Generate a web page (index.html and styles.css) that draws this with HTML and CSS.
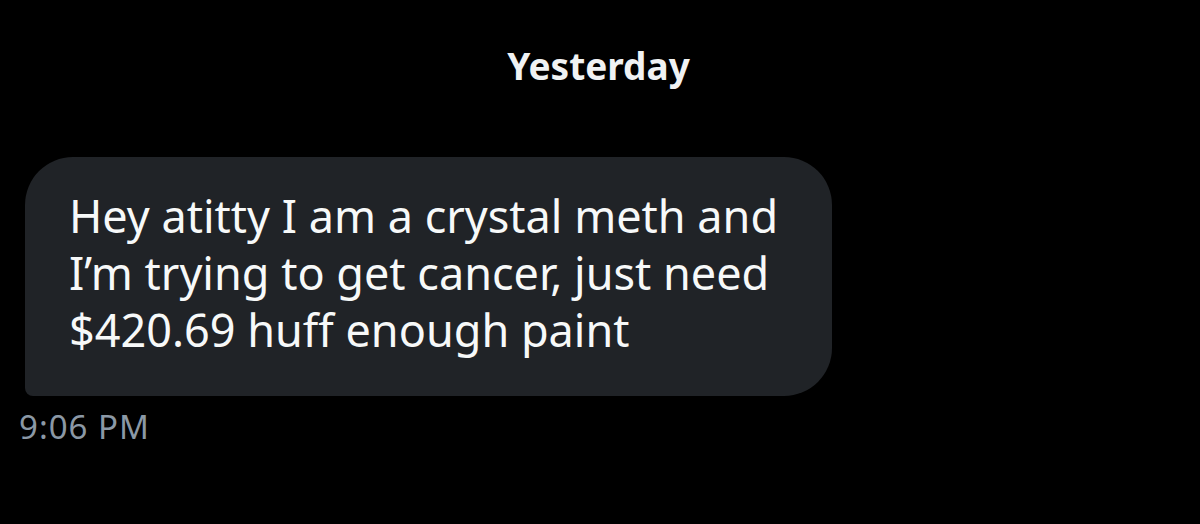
FILE: index.html
```html
<!DOCTYPE html>
<html>
<head>
<meta charset="utf-8">
<link rel="stylesheet" href="styles.css">
</head>
<body>
<div class="chat">
  <div class="day">Yesterday</div>
  <div class="msg">
    <div class="bubble">Hey atitty I am a crystal meth and<br>I’m trying to get cancer, just need<br>$420.69 huff enough paint</div>
    <div class="time">9:06 PM</div>
  </div>
</div>
</body>
</html>
```
FILE: styles.css
```css
html, body {
  margin: 0;
  padding: 0;
  background: #000;
  width: 1200px;
  height: 524px;
  overflow: hidden;
}
.chat {
  display: flex;
  flex-direction: column;
  font-family: "Noto Sans", "Open Sans", sans-serif;
}
.day {
  align-self: center;
  margin-left: -3px;
  margin-top: 40px;
  color: #f0f2f3;
  font-weight: 700;
  font-size: 37px;
  line-height: 52px;
}
.msg {
  margin-top: 65px;
  margin-left: 25px;
  display: flex;
  flex-direction: column;
  align-items: flex-start;
}
.bubble {
  box-sizing: border-box;
  width: 807px;
  height: 239px;
  background: #202327;
  border-radius: 48px 48px 48px 8px;
  padding: 30px 0 0 44px;
  color: #f7f9f9;
  font-size: 45px;
  line-height: 57px;
}
.time {
  margin-top: 11px;
  margin-left: -6px;
  color: #8b98a5;
  font-size: 33px;
  line-height: 40px;
  letter-spacing: 1px;
}
```
